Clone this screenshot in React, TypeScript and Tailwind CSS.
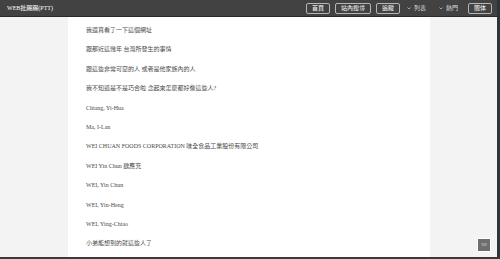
import React from "react";

const lines = [
  "我還真看了一下這個網址",
  "跟那近這幾年 台灣所發生的事情",
  "跟這些非常可惡的人 或者是他家族內的人",
  "我不知道是不是巧合啦 念起來怎麼都好像這些人?",
  "Chiang, Yi-Hua",
  "Ma, I-Lan",
  "WEI CHUAN FOODS CORPORATION 味全食品工業股份有限公司",
  "WEI Yin Chun 魏應充",
  "WEI, Yin Chun",
  "WEI, Yin-Heng",
  "WEI, Ying-Chiao",
  "小弟能想到的就這些人了",
];

const serif = { fontFamily: '"Liberation Serif", "Noto Sans CJK TC", serif' };

function Btn({ children }: { children: React.ReactNode }) {
  return (
    <div className="h-[11px] flex items-center px-[5px] border border-[#b5b5b5] rounded-[2px] text-[6px] text-white leading-none">
      {children}
    </div>
  );
}

function Drop({ children }: { children: React.ReactNode }) {
  return (
    <div className="flex items-center gap-[3px] text-[6px] text-[#dddddd] leading-none">
      <svg width="4" height="3" viewBox="0 0 4 3">
        <path d="M0.5 0.5 L2 2 L3.5 0.5" stroke="#cccccc" strokeWidth="0.7" fill="none" />
      </svg>
      <span>{children}</span>
    </div>
  );
}

export default function App() {
  return (
    <div className="w-[500px] h-[259px] flex flex-col overflow-hidden" style={serif}>
      <div className="flex flex-1 min-h-0">
        <div className="w-[497px] flex flex-col relative">
          <div className="h-[17px] bg-[#424242] border-b border-[#2a2a2a] flex items-center">
            <div className="pl-[7px] text-[6px] text-white leading-none">WEB批踢踢(PTT)</div>
            <div className="ml-auto flex items-center pr-[5px]">
              <div className="flex items-center gap-[5px]">
                <Btn>首頁</Btn>
                <Btn>站內搜尋</Btn>
                <Btn>追蹤</Btn>
              </div>
              <div className="ml-[7px]"><Drop>列表</Drop></div>
              <div className="ml-[13px]"><Drop>熱門</Drop></div>
              <div className="ml-[10px]"><Btn>簡体</Btn></div>
            </div>
          </div>
          <div className="flex flex-1 min-h-0">
            <div className="w-[68px] bg-[#f3f3f3]" />
            <div className="w-[362px] bg-white pl-[18px] pt-[4px]">
              {lines.map((l, i) => (
                <div key={i} className="text-[6px] leading-[19.4px] text-[#4a4a4a] whitespace-nowrap">
                  {l}
                </div>
              ))}
            </div>
            <div className="flex-1 bg-[#f3f3f3]" />
          </div>
          <div className="absolute left-[477px] top-[238px] w-[14px] h-[14px] bg-[#6e6e6e] border border-white flex items-center justify-center text-[3px] text-[#dddddd] leading-none">
            TOP
          </div>
        </div>
        <div className="flex-1 bg-[#2c3636]" />
      </div>
      <div className="h-[2px] bg-[#3a3a3a]" />
    </div>
  );
}
